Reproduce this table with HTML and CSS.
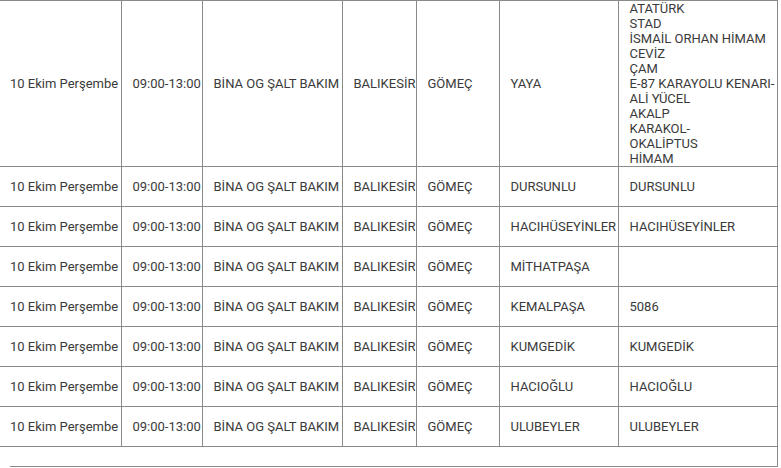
FILE: index.html
```html
<!DOCTYPE html>
<html lang="tr">
<head>
<meta charset="utf-8">
<title>Kesinti Tablosu</title>
<link rel="stylesheet" href="styles.css">
</head>
<body>
<div class="wrap">
<table class="grid">
<colgroup>
<col class="c1"><col class="c2"><col class="c3"><col class="c4"><col class="c5"><col class="c6"><col class="c7">
</colgroup>
<tbody>
<tr class="tall">
<td>10 Ekim Perşembe</td><td>09:00-13:00</td><td>BİNA OG ŞALT BAKIM</td><td>BALIKESİR</td><td>GÖMEÇ</td><td>YAYA</td>
<td class="multi">ATATÜRK<br>STAD<br>İSMAİL ORHAN HİMAM<br>CEVİZ<br>ÇAM<br>E-87 KARAYOLU KENARI-<br>ALİ YÜCEL<br>AKALP<br>KARAKOL-<br>OKALİPTUS<br>HİMAM</td>
</tr>
<tr><td>10 Ekim Perşembe</td><td>09:00-13:00</td><td>BİNA OG ŞALT BAKIM</td><td>BALIKESİR</td><td>GÖMEÇ</td><td>DURSUNLU</td><td>DURSUNLU</td></tr>
<tr><td>10 Ekim Perşembe</td><td>09:00-13:00</td><td>BİNA OG ŞALT BAKIM</td><td>BALIKESİR</td><td>GÖMEÇ</td><td>HACIHÜSEYİNLER</td><td>HACIHÜSEYİNLER</td></tr>
<tr><td>10 Ekim Perşembe</td><td>09:00-13:00</td><td>BİNA OG ŞALT BAKIM</td><td>BALIKESİR</td><td>GÖMEÇ</td><td>MİTHATPAŞA</td><td></td></tr>
<tr><td>10 Ekim Perşembe</td><td>09:00-13:00</td><td>BİNA OG ŞALT BAKIM</td><td>BALIKESİR</td><td>GÖMEÇ</td><td>KEMALPAŞA</td><td>5086</td></tr>
<tr><td>10 Ekim Perşembe</td><td>09:00-13:00</td><td>BİNA OG ŞALT BAKIM</td><td>BALIKESİR</td><td>GÖMEÇ</td><td>KUMGEDİK</td><td>KUMGEDİK</td></tr>
<tr><td>10 Ekim Perşembe</td><td>09:00-13:00</td><td>BİNA OG ŞALT BAKIM</td><td>BALIKESİR</td><td>GÖMEÇ</td><td>HACIOĞLU</td><td>HACIOĞLU</td></tr>
<tr><td>10 Ekim Perşembe</td><td>09:00-13:00</td><td>BİNA OG ŞALT BAKIM</td><td>BALIKESİR</td><td>GÖMEÇ</td><td>ULUBEYLER</td><td>ULUBEYLER</td></tr>
</tbody>
</table>
<div class="spacer"></div>
</div>
<div class="rule"></div>
</body>
</html>
```
FILE: styles.css
```css
html, body {
  margin: 0;
  padding: 0;
  background: #ffffff;
}
body {
  font-family: Roboto, "Liberation Sans", Arial, sans-serif;
  font-size: 13px;
  line-height: 15px;
  color: #3a3a3a;
}
.wrap {
  width: 777px;
  border-right: 1px solid #8a8a8a;
}
.grid {
  width: 778px;
  table-layout: fixed;
  border-collapse: collapse;
  border-top: 1px solid #8a8a8a;
}
.c1 { width: 121px; }
.c2 { width: 81px; }
.c3 { width: 140px; }
.c4 { width: 74px; }
.c5 { width: 83px; }
.c6 { width: 119px; }
.c7 { width: 160px; }
.grid td {
  height: 39px;
  padding: 0 1px 0 11px;
  border-right: 1px solid #8a8a8a;
  border-bottom: 1px solid #8a8a8a;
  vertical-align: middle;
  white-space: nowrap;
  overflow: hidden;
}
.grid td:first-child {
  padding-left: 10px;
}
.grid td:last-child {
  border-right: none;
}
.grid td.multi {
  padding-top: 0;
  padding-bottom: 0;
}
.spacer {
  height: 19px;
}
.rule {
  margin-left: 10px;
  width: 768px;
  border-top: 1px solid #8a8a8a;
  height: 4px;
}
```
